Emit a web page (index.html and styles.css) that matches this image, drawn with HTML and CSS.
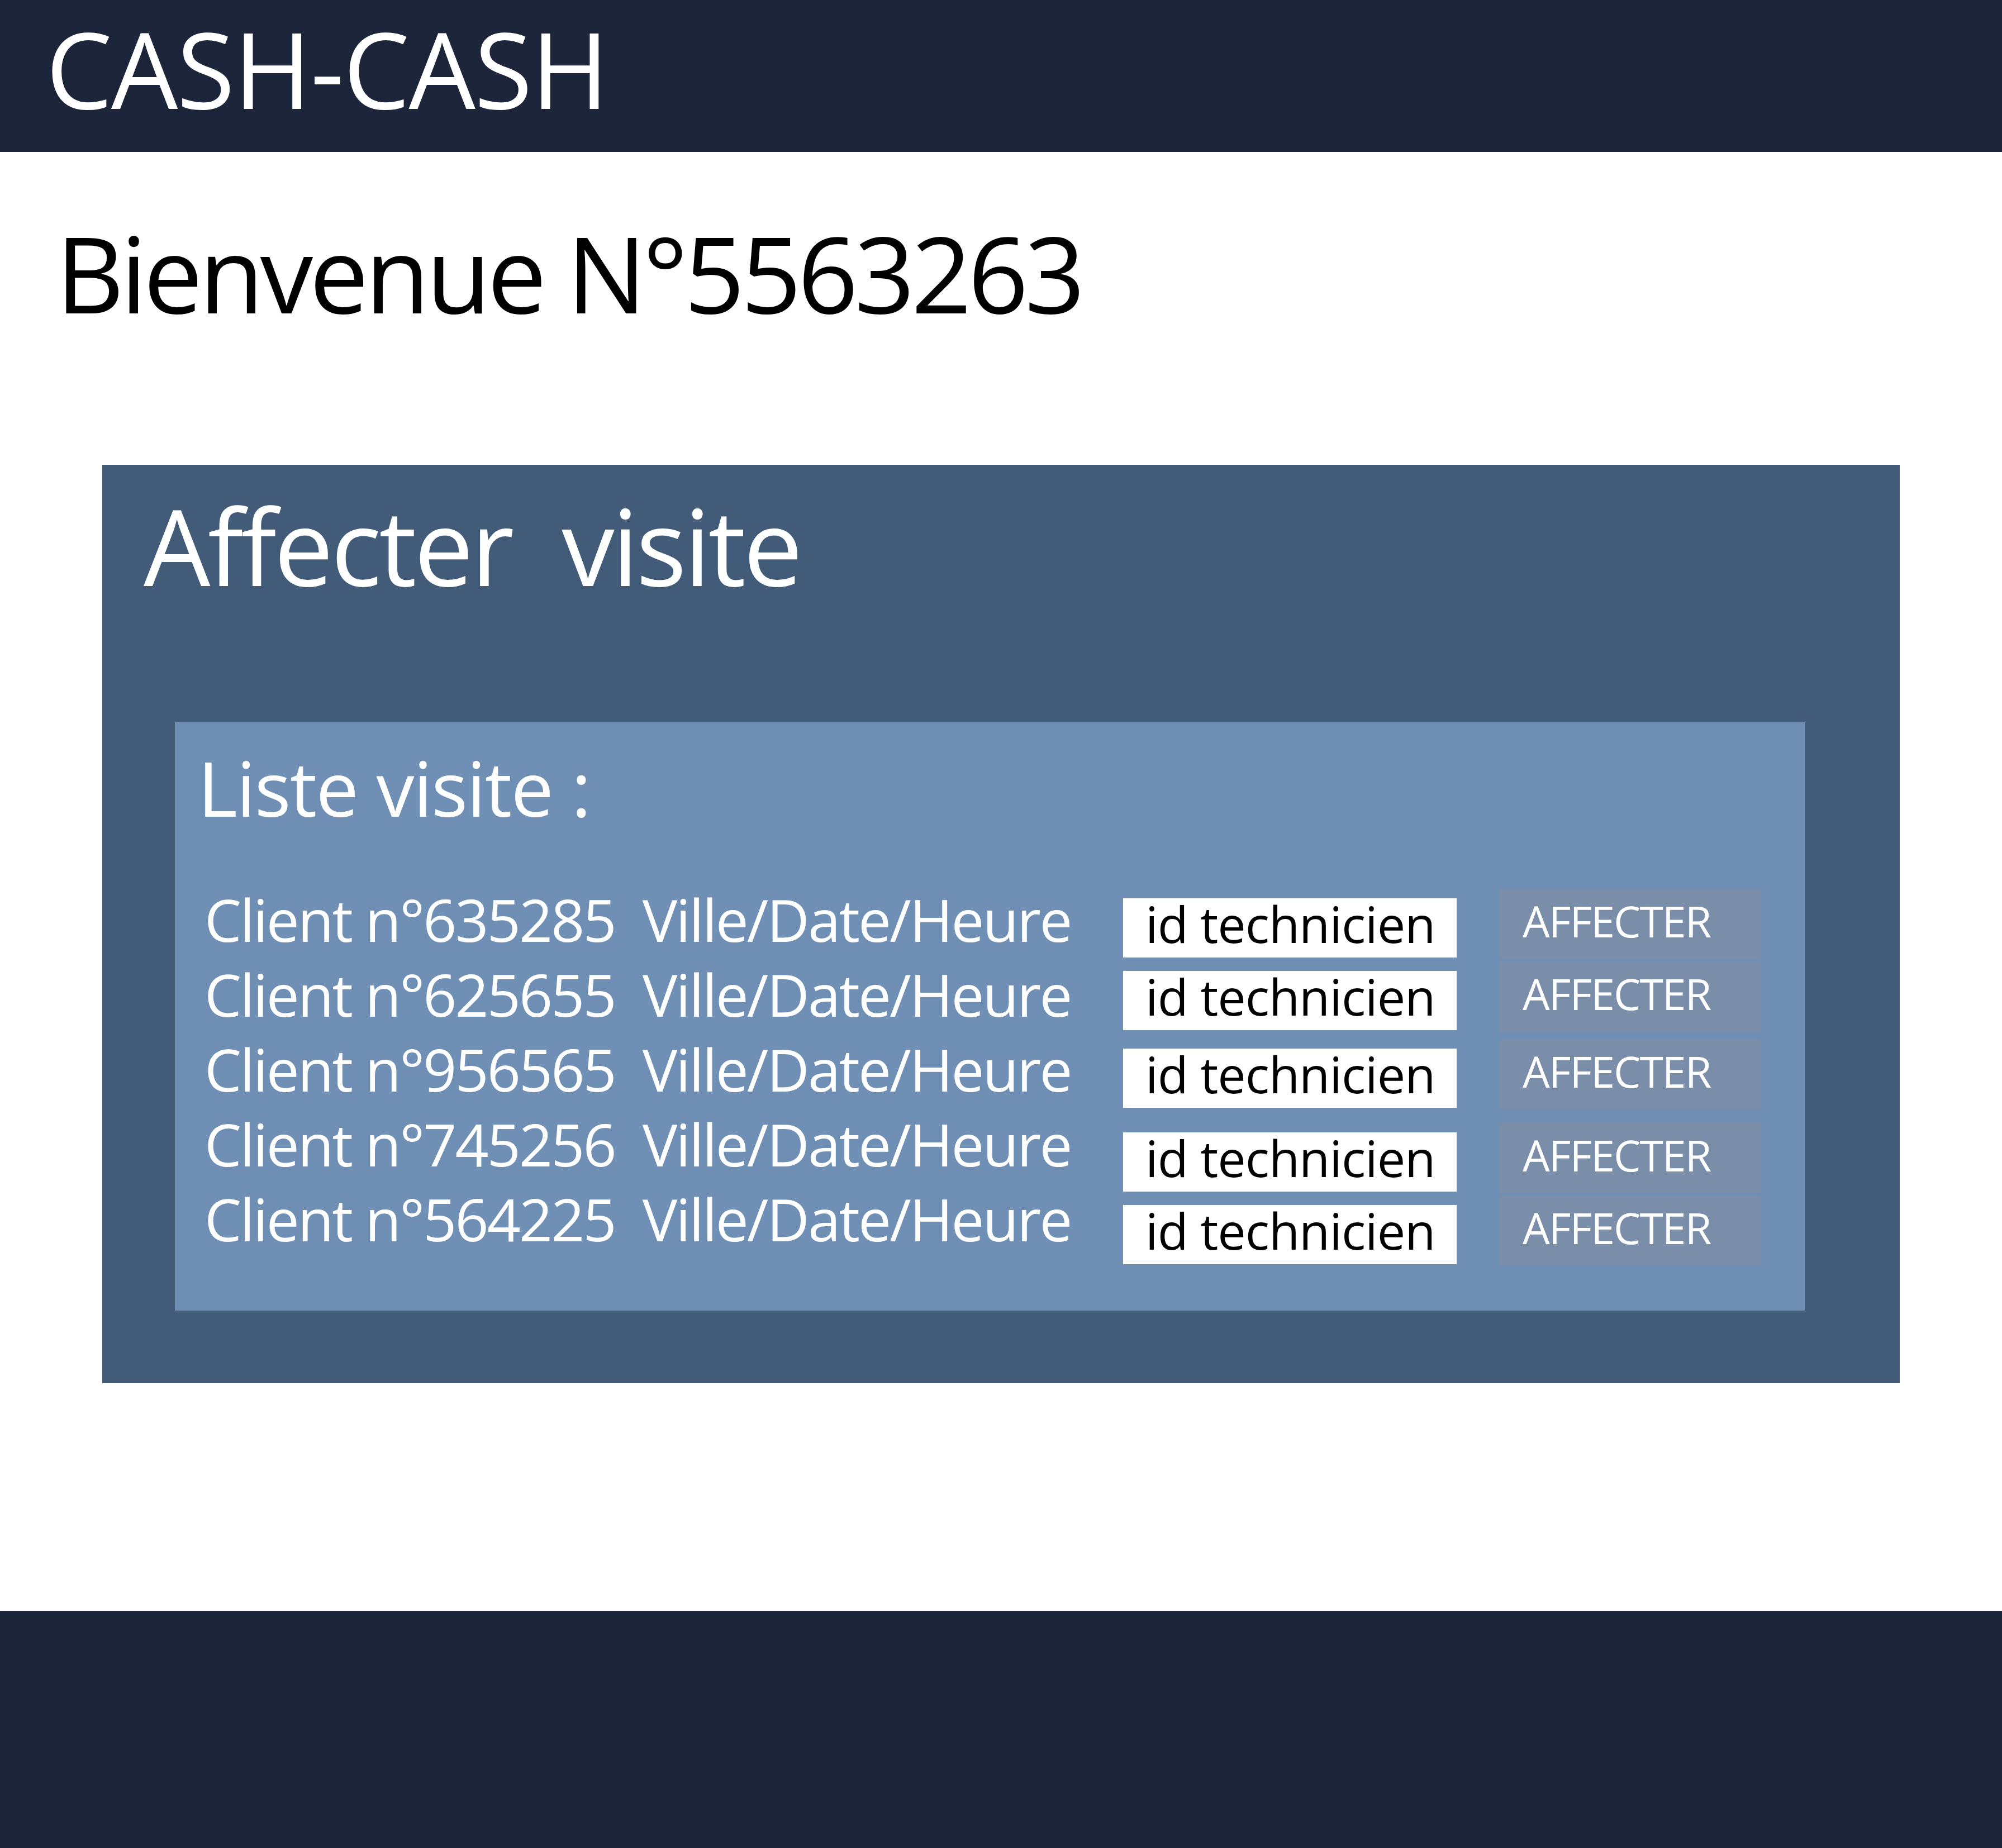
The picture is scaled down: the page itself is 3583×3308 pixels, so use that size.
FILE: index.html
```html
<!DOCTYPE html>
<html lang="fr">
<head>
<meta charset="utf-8">
<title>CASH-CASH</title>
<link rel="stylesheet" href="styles.css">
</head>
<body>
<header class="topbar">
  <h1 class="brand">CASH-CASH</h1>
</header>
<main class="main">
  <h2 class="welcome">Bienvenue N°5563263</h2>
  <section class="panel">
    <h3 class="panel-title">Affecter&nbsp; visite</h3>
    <div class="list">
      <h4 class="list-title">Liste visite :</h4>
      <div class="rows">
        <div class="clients">
          <p class="client">Client n°635285&nbsp; Ville/Date/Heure</p>
          <p class="client">Client n°625655&nbsp; Ville/Date/Heure</p>
          <p class="client">Client n°956565&nbsp; Ville/Date/Heure</p>
          <p class="client">Client n°745256&nbsp; Ville/Date/Heure</p>
          <p class="client">Client n°564225&nbsp; Ville/Date/Heure</p>
        </div>
        <div class="controls">
          <div class="pair">
            <div class="tech">id technicien</div>
            <div class="btn">AFFECTER</div>
          </div>
          <div class="pair sp-s">
            <div class="tech">id technicien</div>
            <div class="btn">AFFECTER</div>
          </div>
          <div class="pair sp-m">
            <div class="tech">id technicien</div>
            <div class="btn">AFFECTER</div>
          </div>
          <div class="pair sp-l">
            <div class="tech">id technicien</div>
            <div class="btn">AFFECTER</div>
          </div>
          <div class="pair sp-s">
            <div class="tech">id technicien</div>
            <div class="btn">AFFECTER</div>
          </div>
        </div>
      </div>
    </div>
  </section>
</main>
<footer class="footer"></footer>
</body>
</html>
```
FILE: styles.css
```css
* { box-sizing: border-box; }
html, body { margin: 0; padding: 0; }
body {
  width: 3583px;
  height: 3308px;
  background: #ffffff;
  font-family: "Open Sans", "Noto Sans", "Liberation Sans", sans-serif;
  display: flex;
  flex-direction: column;
  overflow: hidden;
}
h1, h2, h3, h4, p { margin: 0; font-weight: 400; }

.topbar {
  height: 272px;
  background: #1d253a;
  padding: 27px 0 0 82px;
  flex: none;
}
.brand {
  font-size: 189px;
  line-height: 1;
  color: #ffffff;
  letter-spacing: -2px;
}

.main {
  flex: 1;
  display: flex;
  flex-direction: column;
}
.welcome {
  margin: 121px 0 0 100px;
  font-size: 189px;
  line-height: 1;
  color: #000000;
  letter-spacing: -6.5px;
}

.panel {
  margin: 250px 0 0 183px;
  width: 3217px;
  height: 1644px;
  background: #425b79;
  padding: 49px 170px 130px 130px;
}
.panel-title {
  margin-left: -56px;
  font-size: 189px;
  line-height: 1;
  color: #ffffff;
  letter-spacing: -4.4px;
}

.list {
  margin-top: 223px;
  height: 1053px;
  background: #6f8fb4;
  padding: 49px 0 0 41px;
}
.list-title {
  font-size: 136px;
  line-height: 1;
  color: #ffffff;
  letter-spacing: -1.8px;
}

.rows {
  display: flex;
  margin-top: 101px;
}
.clients {
  width: 1656px;
  padding-left: 12px;
  display: flex;
  flex-direction: column;
}
.client {
  font-size: 105px;
  line-height: 134px;
  color: #ffffff;
  white-space: nowrap;
  letter-spacing: -2.8px;
}

.controls {
  display: flex;
  flex-direction: column;
  padding-top: 12px;
}
.pair {
  display: flex;
  align-items: flex-start;
  gap: 76px;
}
.pair.sp-s { margin-top: 4px; }
.pair.sp-m { margin-top: 13px; }
.pair.sp-l { margin-top: 24px; }

.tech {
  margin-top: 17px;
  width: 597px;
  height: 106px;
  background: #ffffff;
  color: #000000;
  font-size: 90px;
  line-height: 1;
  padding-left: 40px;
  white-space: nowrap;
  letter-spacing: -1px;
}
.btn {
  width: 468px;
  height: 126px;
  background: #7a8eaa;
  color: #ffffff;
  font-size: 77px;
  line-height: 1;
  padding: 19px 0 0 42px;
  letter-spacing: -2px;
  white-space: nowrap;
}

.footer {
  flex: none;
  height: 424px;
  background: #1d253a;
}
```
